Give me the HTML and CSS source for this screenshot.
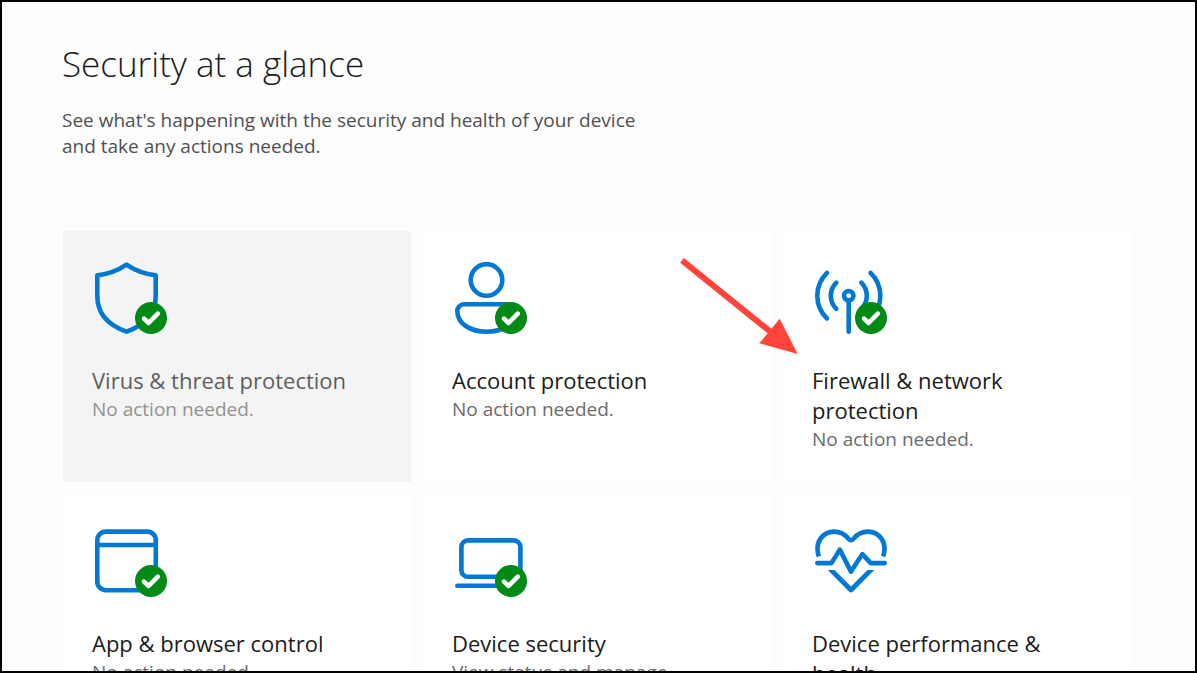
FILE: index.html
```
<!DOCTYPE html>
<html lang="en">

<head>
    <meta charset="UTF-8">
    <meta name="viewport" content="width=device-width, initial-scale=1.0">
    <title>Windows Security</title>

    <link rel="stylesheet" href="styles.css">

</head>

<body>

    <!-- green status tick, reused by the icons -->
    <svg class="defs" aria-hidden="true">
        <symbol id="ok" viewBox="0 0 32 32">
            <circle cx="16" cy="16" r="16" fill="#028a16"/>
            <path d="M9 16.6L13.6 21L22.8 11.6" fill="none" stroke="#fff" stroke-width="4.6" stroke-linecap="round"/>
        </symbol>
    </svg>

    <main class="window">
        <h1>Security at a glance</h1>
        <p class="intro">See what's happening with the security and health of your device and take any actions needed.</p>

        <div class="tiles">
            <a class="tile pressed" href="#virus">
                <svg class="icon" viewBox="0 0 72 72">
                    <path d="M31.5 2.7C40 8.5 49 12 60.7 13.4V34C60.7 52 49 63.5 31.5 69.6C14 63.5 2.3 52 2.3 34V13.4C14 12 23 8.5 31.5 2.7Z"/>
                    <use href="#ok" x="40" y="40" width="32" height="32"/>
                </svg>
                <h2>Virus &amp; threat protection</h2>
                <p>No action needed.</p>
            </a>

            <a class="tile" href="#account">
                <svg class="icon" viewBox="0 0 72 72">
                    <circle cx="31.5" cy="18" r="15.8"/>
                    <path d="M9 42.3H54A6.7 6.7 0 0 1 60.7 49C60.7 62 47 69.7 31.5 69.7S2.3 62 2.3 49A6.7 6.7 0 0 1 9 42.3Z"/>
                    <use href="#ok" x="40" y="40" width="32" height="32"/>
                </svg>
                <h2>Account protection</h2>
                <p>No action needed.</p>
            </a>

            <a class="tile" href="#firewall">
                <svg class="icon" viewBox="0 0 72 72">
                    <circle cx="33.7" cy="33.7" r="4.7"/>
                    <path d="M33.7 39V69.7M12 10.9Q2.3 20.5 2.3 33.7T12 56.5M55.6 10.9Q65.3 20.5 65.3 33.7T55.6 56.5M21.3 20.6Q15.8 26 15.8 33.7T21.3 46.8M46.3 20.6Q51.8 26 51.8 33.7T46.3 46.8"/>
                    <use href="#ok" x="40" y="40" width="32" height="32"/>
                </svg>
                <h2>Firewall &amp; network protection</h2>
                <p>No action needed.</p>
                <svg class="arrow" viewBox="0 0 120 98">
                    <path d="M2 2.3L92 75" stroke="#ff453a" stroke-width="6"/>
                    <path d="M99.7 60.7L117.7 96L79.3 85.3Z" fill="#ff453a"/>
                </svg>
            </a>

            <a class="tile" href="#app">
                <svg class="icon" viewBox="0 0 72 72">
                    <rect x="2.3" y="6.6" width="58.5" height="58.6" rx="8.5"/>
                    <path d="M3 20H60"/>
                    <use href="#ok" x="40" y="40" width="32" height="32"/>
                </svg>
                <h2>App &amp; browser control</h2>
                <p>No action needed.</p>
            </a>

            <a class="tile" href="#device">
                <svg class="icon" viewBox="0 0 72 72">
                    <rect x="6.4" y="15.4" width="59" height="36.4" rx="6.5"/>
                    <path d="M2.3 60.7H60"/>
                    <use href="#ok" x="40" y="40" width="32" height="32"/>
                </svg>
                <h2>Device security</h2>
                <p>View status and manage hardware security features</p>
            </a>

            <a class="tile" href="#health">
                <svg class="icon" viewBox="0 0 72 72">
                    <path class="flat" d="M3.9 31.5C-1 17 8 6.6 19.3 6.6C25.500 6.600 30 9.500 33.500 13.700Q36 16.600 38.500 13.700C42 9.500 46.500 6.600 52.700 6.600C64 6.600 73 17 68.100 31.500"/>
                    <path d="M2.3 38.1H16.5L24.8 24.6L36 46.6L47.3 29.2L55.7 38.1H69.7"/>
                    <path class="solid" d="M12.8 45H19.5L36 61.4L52.5 45H59.2L37.8 66.8Q36 68.4 34.2 66.8Z"/>
                </svg>
                <h2>Device performance &amp; health</h2>
                <p>No action needed.</p>
            </a>
        </div>
    </main>

</body>

</html>
```

FILE: styles.css
```
* {
    box-sizing: border-box;
    font-family: "Segoe UI", "Open Sans", "Noto Sans", sans-serif;
}

body {
    margin: 0;
}

.defs {
    display: none;
}

.window {
    height: 100vh;
    overflow: hidden;
    padding: 38px 60px 0;
    border: 2px solid black;
    background-color: #fdfdfd;
}

h1 {
    margin: 0;
    font-size: 35px;
    line-height: 48px;
    font-weight: 300;
    color: #1b1b1b;
}

.intro {
    max-width: 580px;
    margin: 19px 0 72px;
    font-size: 19px;
    line-height: 26px;
    color: #505050;
}

.tiles {
    display: grid;
    grid-template-columns: repeat(3, 1fr);
    gap: 12px;
    max-width: 1068px;
    margin-left: 1px;
}

.tile {
    position: relative;
    min-height: 251px;
    padding: 31px 29px 30px;
    background-color: white;
    color: #1b1b1b;
    text-decoration: none;
}

.tile h2 {
    margin: 31px 0 0;
    font-size: 22px;
    line-height: 30px;
    font-weight: 400;
}

.tile p {
    margin: 1px 0 0;
    font-size: 19px;
    line-height: 26px;
    color: #6b6b6b;
}

.tile.pressed {
    background-color: #f4f4f4;
}

.tile.pressed h2 {
    color: #5f5f5f;
}

.tile.pressed p {
    color: #929292;
}

.icon {
    display: block;
    width: 72px;
    height: 72px;
    margin-left: 3px;
    fill: none;
    stroke: #0078d4;
    stroke-width: 4.6;
    stroke-linecap: round;
    stroke-linejoin: round;
}

.icon use {
    stroke: none;
}

.icon .flat {
    stroke-linecap: butt;
}

.icon .solid {
    fill: #0078d4;
    stroke: none;
}

/* pointer over the firewall tile */
.arrow {
    position: absolute;
    top: 27px;
    left: -103px;
    width: 120px;
    height: 98px;
}
```
